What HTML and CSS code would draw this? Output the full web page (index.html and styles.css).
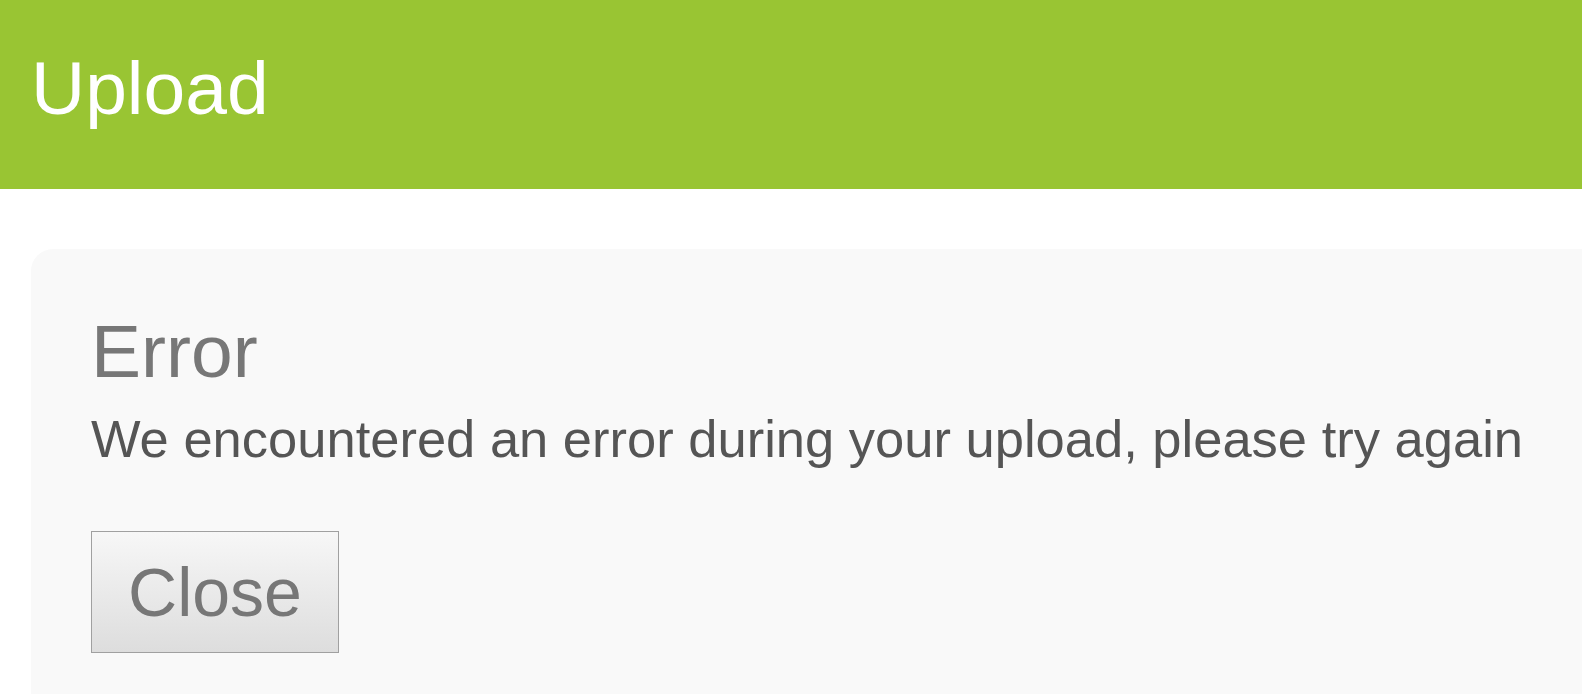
FILE: index.html
```html
<!DOCTYPE html>
<html lang="en">
<head>
<meta charset="utf-8">
<title>Upload</title>
<link rel="stylesheet" href="styles.css">
</head>
<body>
  <header class="topbar">
    <h1 class="topbar-title">Upload</h1>
  </header>
  <main class="panel">
    <h2 class="panel-title">Error</h2>
    <p class="panel-message">We encountered an error during your upload, please try again</p>
    <button class="btn" type="button">Close</button>
  </main>
</body>
</html>
```

FILE: styles.css
```css
html, body {
  margin: 0;
  padding: 0;
  background: #ffffff;
  font-family: "Liberation Sans", Arial, sans-serif;
  overflow: hidden;
}

.topbar {
  box-sizing: border-box;
  height: 189px;
  padding: 45px 0 0 31px;
  background: #99c533;
}

.topbar-title {
  margin: 0;
  font-size: 75px;
  font-weight: normal;
  line-height: 1.15;
  color: #ffffff;
}

.panel {
  box-sizing: border-box;
  margin: 60px 0 0 31px;
  min-height: 460px;
  padding: 59px 0 40px 60px;
  background: #f9f9f9;
  border-radius: 22px 0 0 0;
}

.panel-title {
  margin: 0;
  font-size: 75px;
  font-weight: normal;
  line-height: 1.15;
  color: #777777;
}

.panel-message {
  margin: 15px 0 0 0;
  font-size: 52.5px;
  line-height: 1.15;
  color: #555555;
  white-space: nowrap;
}

.btn {
  display: block;
  box-sizing: border-box;
  margin: 61px 0 0 0;
  width: 248px;
  height: 122px;
  padding: 1px 0 0 0;
  font-family: "Liberation Sans", Arial, sans-serif;
  font-size: 68px;
  line-height: 1.15;
  color: #777777;
  border: 1px solid #a0a0a0;
  border-radius: 0;
  background: linear-gradient(to bottom, #f7f7f7 0%, #dddddd 100%);
}
```
